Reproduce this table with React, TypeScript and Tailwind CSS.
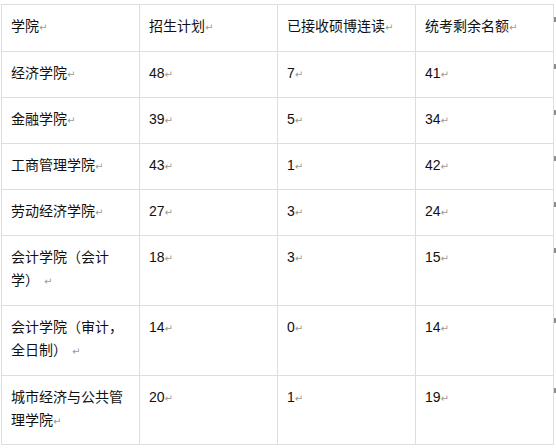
const rows = [
  { name: "学院", plan: "招生计划", taken: "已接收硕博连读", left: "统考剩余名额", h: "h-[47px]" },
  { name: "经济学院", plan: "48", taken: "7", left: "41", h: "h-[46px]" },
  { name: "金融学院", plan: "39", taken: "5", left: "34", h: "h-[46px]" },
  { name: "工商管理学院", plan: "43", taken: "1", left: "42", h: "h-[46px]" },
  { name: "劳动经济学院", plan: "27", taken: "3", left: "24", h: "h-[46px]" },
  { name: "会计学院（会计学）", plan: "18", taken: "3", left: "15", gap: true, h: "h-[70px]" },
  { name: "会计学院（审计，全日制）", plan: "14", taken: "0", left: "14", gap: true, h: "h-[70px]" },
  { name: "城市经济与公共管理学院", plan: "20", taken: "1", left: "19", h: "h-[69px]" },
];

const Mark = ({ gap }: { gap?: boolean }) => (
  <span className={`text-[10px] leading-none text-[#9a9a9a] font-['DejaVu_Sans',sans-serif] ${gap ? "ml-[5px]" : ""}`}>↵</span>
);

const Cell = ({ text, gap }: { text: string; gap?: boolean }) => (
  <div className="border-r border-b border-[#dedede] pl-[9px] pr-[10px] pt-[10px] leading-[23px]">
    {text}
    <Mark gap={gap} />
  </div>
);

export default function App() {
  return (
    <div className="bg-white w-[556px] h-[448px] pt-[4px] pl-[1px] font-['Liberation_Sans','Noto_Sans_CJK_SC',sans-serif] text-[14px] text-[#111]">
      <div className="relative w-[553px] border-l border-t border-[#dedede]">
        {rows.map((r, i) => (
          <div key={i} className={`relative grid grid-cols-[138px_138px_138px_138px] ${r.h}`}>
            <Cell text={r.name} gap={r.gap} />
            <Cell text={r.plan} />
            <Cell text={r.taken} />
            <Cell text={r.left} />
            <span className="absolute right-[-3px] top-[12px] w-[3px] h-[5px] rounded-r-full bg-[#8a8a8a]" />
          </div>
        ))}
      </div>
    </div>
  );
}
